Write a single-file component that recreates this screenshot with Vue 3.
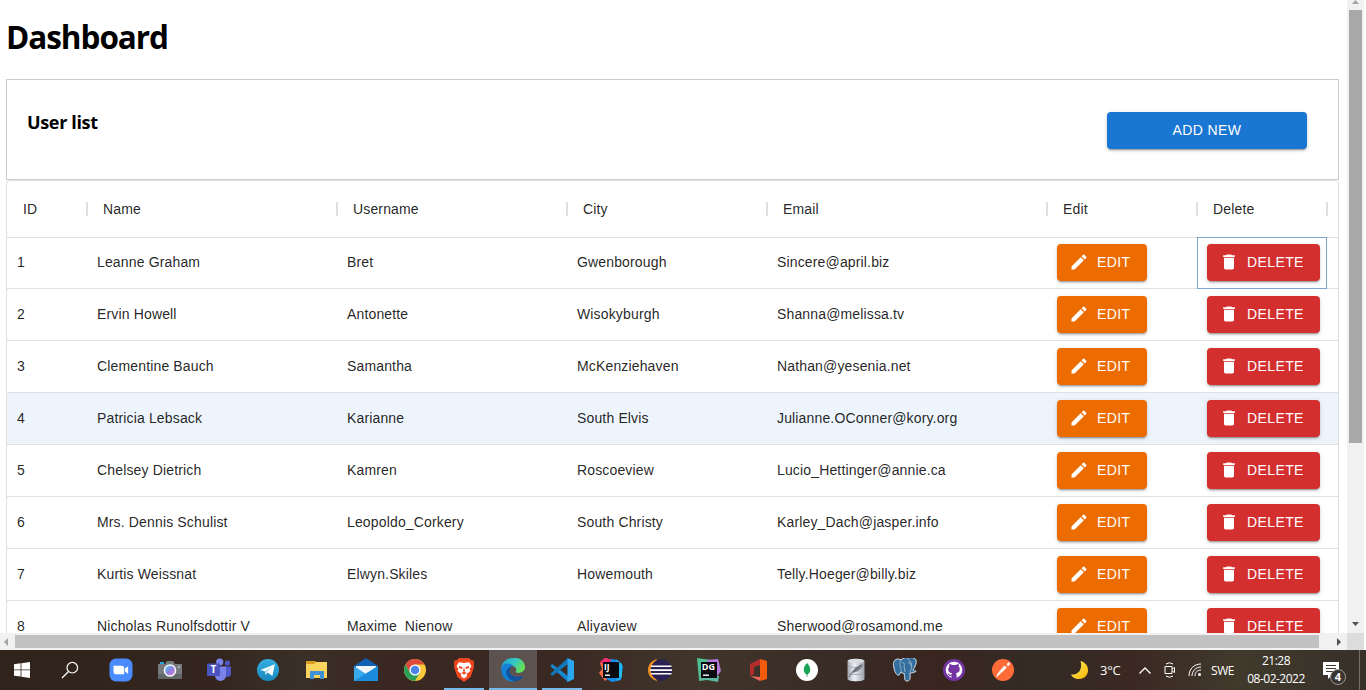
<script setup>
const columns = [
  { label: 'ID', key: 'id' },
  { label: 'Name', key: 'name' },
  { label: 'Username', key: 'username' },
  { label: 'City', key: 'city' },
  { label: 'Email', key: 'email' },
  { label: 'Edit', key: 'edit' },
  { label: 'Delete', key: 'delete' },
]
const users = [
  [1, 'Leanne Graham', 'Bret', 'Gwenborough', 'Sincere@april.biz'],
  [2, 'Ervin Howell', 'Antonette', 'Wisokyburgh', 'Shanna@melissa.tv'],
  [3, 'Clementine Bauch', 'Samantha', 'McKenziehaven', 'Nathan@yesenia.net'],
  [4, 'Patricia Lebsack', 'Karianne', 'South Elvis', 'Julianne.OConner@kory.org'],
  [5, 'Chelsey Dietrich', 'Kamren', 'Roscoeview', 'Lucio_Hettinger@annie.ca'],
  [6, 'Mrs. Dennis Schulist', 'Leopoldo_Corkery', 'South Christy', 'Karley_Dach@jasper.info'],
  [7, 'Kurtis Weissnat', 'Elwyn.Skiles', 'Howemouth', 'Telly.Hoeger@billy.biz'],
  [8, 'Nicholas Runolfsdottir V', 'Maxime_Nienow', 'Aliyaview', 'Sherwood@rosamond.me'],
]
</script>

<template>
  <div class="screen">
    <div class="browser">
      <main class="viewport">
        <h1>Dashboard</h1>
        <section class="panel">
          <h3>User list</h3>
          <button class="btn add">ADD NEW</button>
        </section>
        <section class="grid">
          <div class="row head">
            <div v-for="c in columns" :key="c.key" class="th">{{ c.label }}<i class="sep"></i></div>
          </div>
          <div v-for="u in users" :key="u[0]" class="row" :class="{ first: u[0] === 1, hovered: u[0] === 4 }">
            <div v-for="(v, i) in u" :key="i" class="td text">{{ v }}</div>
            <div class="td">
              <button class="btn edit">
                <svg viewBox="0 0 24 24"><path d="M3 17.25V21h3.75L17.81 9.94l-3.75-3.75L3 17.25zM20.71 7.04c.39-.39.39-1.02 0-1.41l-2.34-2.34a.996.996 0 0 0-1.41 0l-1.83 1.83 3.75 3.75 1.83-1.83z" /></svg>EDIT
              </button>
            </div>
            <div class="td" :class="{ focused: u[0] === 1 }">
              <button class="btn delete">
                <svg viewBox="0 0 24 24"><path d="M6 19c0 1.1.9 2 2 2h8c1.1 0 2-.9 2-2V7H6v12zM19 4h-3.5l-1-1h-5l-1 1H5v2h14V4z" /></svg>DELETE
              </button>
            </div>
          </div>
        </section>
      </main>
      <div class="vscroll">
        <svg class="arrow up" viewBox="0 0 7 4"><path d="M0 4 3.5 0 7 4z" /></svg>
        <div class="vthumb"></div>
        <svg class="arrow down" viewBox="0 0 7 4"><path d="M0 0h7L3.5 4z" /></svg>
      </div>
      <div class="hscroll">
        <svg class="arrow left" viewBox="0 0 4 8"><path d="M4 0v8L0 4z" /></svg>
        <div class="hthumb"></div>
        <svg class="arrow right" viewBox="0 0 4 8"><path d="M0 0v8l4-4z" /></svg>
      </div>
      <div class="corner"></div>
    </div>

    <footer class="taskbar">
      <div class="start">
        <svg width="16" height="16" viewBox="0 0 16 16" fill="#fff"><path d="M0 2.2 6.6 1.3v6.2H0zM7.4 1.2 16 0v7.5H7.4zM0 8.3h6.6v6.3L0 13.7zM7.4 8.3H16V16l-8.6-1.2z" /></svg>
      </div>
      <div class="search">
        <svg width="18" height="18" viewBox="0 0 18 18" fill="none" stroke="#fff" stroke-width="1.2"><circle cx="11.3" cy="6.7" r="5.3" /><path d="M7.5 10.5 1 17" /></svg>
      </div>
      <div class="apps">
        <!-- Zoom -->
        <div class="app"><svg viewBox="0 0 24 24"><rect x=".5" y=".5" width="23" height="23" rx="6.5" fill="#4a8cff" /><path d="M4.5 7.8h8.2c1.5 0 2.5 1 2.5 2.4v6H7c-1.5 0-2.5-1-2.5-2.4zM16 10.5l3.1-2.3v7.7L16 13.6z" fill="#fff" /></svg></div>
        <!-- Camera -->
        <div class="app"><svg viewBox="0 0 24 24">
          <defs><linearGradient id="lens" x1="0" y1="0" x2="1" y2="1"><stop stop-color="#4bd2f2" /><stop offset=".5" stop-color="#8a7fe0" /><stop offset="1" stop-color="#e478d2" /></linearGradient></defs>
          <path d="M2 4h4v3H2z" fill="#28a8d8" /><path d="M0 6h7l2-3h6l2 3h7v15H0z" fill="#777b7e" /><path d="M0 16h24v5H0z" fill="#62676a" /><circle cx="12" cy="12.5" r="6.3" fill="#f5f5f7" /><circle cx="12" cy="12.5" r="4.8" fill="url(#lens)" /><circle cx="21" cy="9" r="1" fill="#c6c6c6" /></svg></div>
        <!-- Teams -->
        <div class="app"><svg viewBox="0 0 24 24"><circle cx="20.5" cy="5" r="2.6" fill="#5059c9" /><circle cx="12.7" cy="4" r="3.6" fill="#7b83eb" /><path d="M17 8.5h7v7.3c0 4-6 4.2-7 .7z" fill="#5059c9" /><path d="M8 8.5h11v8.8c0 7.5-11 7.5-11 0z" fill="#7b83eb" /><rect y="5.5" width="13" height="12.5" rx="1" fill="#4b53bc" /><text x="6.5" y="15.3" text-anchor="middle" class="glyph" font-size="10">T</text></svg></div>
        <!-- Telegram -->
        <div class="app"><svg viewBox="0 0 24 24"><defs><linearGradient id="tg" x1="0" y1="0" x2="0" y2="1"><stop stop-color="#37aee2" /><stop offset="1" stop-color="#1689bf" /></linearGradient></defs><circle cx="12" cy="12" r="11" fill="url(#tg)" /><path d="M4.5 12 18.8 6.2 16.4 17.9 11.8 14.6 9.7 16.8 8.8 13.2z" fill="#fff" /><path d="m8.8 13.2 7.6-5-5.6 5.9-.8 2.7z" fill="#a9d3e8" /></svg></div>
        <!-- File Explorer -->
        <div class="app"><svg viewBox="0 0 24 24"><path d="M1 3h9l2 2h10v5H1z" fill="#d99c1c" /><path d="M1 6h8l2-2h11v16H1z" fill="#fbd35f" /><path d="M5 21v-8h14v8h-4v-4H9v4z" fill="#3d91d8" /></svg></div>
        <!-- Mail -->
        <div class="app"><svg viewBox="0 0 24 24"><path d="M0 8 12 0l12 8v3H0z" fill="#1260b4" /><path d="M2 8h20v8H2z" fill="#f2f5f8" /><path d="m0 8 12 8 12-8v15H0z" fill="#38a9ec" /><path d="m0 23 24-15v15z" fill="#1b8bde" /></svg></div>
        <!-- Chrome -->
        <div class="app"><svg viewBox="0 0 24 24"><circle cx="12" cy="12" r="11" fill="#f9c93c" /><path d="M2.5 6.5A11 11 0 0 1 21.5 6.5H12L7.2 14.7z" fill="#dc4b3e" /><path d="M2.5 6.5A11 11 0 0 0 12 23l4.8-8.2H7.2z" fill="#2c9f58" /><circle cx="12" cy="12" r="5.6" fill="#fff" /><circle cx="12" cy="12" r="4.3" fill="#4e83e8" /></svg></div>
        <!-- Brave -->
        <div class="app running"><svg viewBox="0 0 24 24"><path d="M7 0h10l2.5 2.5 2-.2L22 6l-.5 2 .5 1-3.4 10L12 24l-6.6-5L2 9l.5-1L2 6l.5-3.7 2 .2z" fill="#f3481d" /><path d="M12 5 7 4.2 4.5 8l2 3-.8 2 3.6 3-.5 2L12 20.500l3.2-2.500-.5-2 3.6-3-.8-2 2-3L17 4.200z" fill="#fff" /><path d="m7 8 3.500 1-.5 2-3-1zM17 8l-3.500 1 .5 2 3-1zM12 9l1 4-1 1.500-1-1.500zM9 15l3-1.300 3 1.300-3 1.500z" fill="#ee4a20" /></svg></div>
        <!-- Edge -->
        <div class="app running active"><svg viewBox="0 0 24 24"><defs><linearGradient id="edgeTop" x1="0" y1="0" x2="1" y2=".4"><stop stop-color="#1da2dc" /><stop offset=".6" stop-color="#35c8c0" /><stop offset="1" stop-color="#66df59" /></linearGradient></defs><path d="M.2 11C1-4 24-3.500 24 9c0 5-6 7.500-9.500 5 2.200-2.500 0-6-4-6C6 8 .5 9 .2 11z" fill="url(#edgeTop)" /><path d="M.2 11C1 3.500 9.500 4.700 12.500 8 8 7.500 5.500 12.500 8 17c2.500 4 6 5 9 4.500C9 27 0 21 .2 11z" fill="#1483d5" /><path d="M11 8.500c-6 5.500-.5 12.500 11.300 9.500-2.700 5.200-9.300 7-14.300 2.500-5-5-3-11.500 3-12z" fill="#1254a0" /><path d="M11 8.500c4 0 4.500 3 2.700 5.300-.7 1.200 1.200 2.500 3.800 2.300-4.500 1.800-9.500-3-6.500-7.600z" fill="#5c5250" /></svg></div>
        <!-- VS Code -->
        <div class="app running"><svg viewBox="0 0 24 24"><path d="m.2 8 2-2L18 18v6z" fill="#1588cf" /><path d="m.2 16 2 2L18 6V0z" fill="#1077ba" /><path d="M17.500 0 24 3v18l-6.500 3z" fill="#2aa5ee" /></svg></div>
        <!-- IntelliJ IDEA -->
        <div class="app"><svg viewBox="0 0 24 24"><path d="M1 5 6 0l7 2-2 17-5 4-6-8 3-4z" fill="#fb6a42" /><path d="m1 4 5-4 7 2-5 7z" fill="#f52a71" /><path d="m12 1 7 1 5 6-2 14-9 2-7-4z" fill="#168cee" /><path d="m17 2 6 4v13l-5 4z" fill="#20b8ec" /><path d="M4 4h16v16H4z" fill="#080a10" /><text x="5" y="12" class="glyph" font-size="8.5">IJ</text><path d="M6 16.500h5v1.400H6z" fill="#fff" /></svg></div>
        <!-- Eclipse -->
        <div class="app"><svg viewBox="0 0 24 24"><path d="M9 1C-3 4-3 20 9 23L5 12z" fill="#f7941e" /><circle cx="13.300" cy="12" r="10.700" fill="#2c2255" /><path d="M3 7.500h20.500v1.600H3zM2 11.200h22v1.700H2zM3 15h20.500v1.600H3z" fill="#fff" /></svg></div>
        <!-- DataGrip -->
        <div class="app"><svg viewBox="0 0 24 24"><path d="m0 0 14 2v15L2 22z" fill="#4fbf92" /><path d="m10 2 11-1 3 12-4 5-10 3z" fill="#b977e0" /><path d="m3 15 19 3-1 6-11-2-8 1z" fill="#5cb9a0" /><path d="M4 4h16v16H4z" fill="#080a10" /><text x="4.800" y="12" class="glyph" font-size="9">DG</text><path d="M6 16.500h6v1.400H6z" fill="#fff" /></svg></div>
        <!-- Office -->
        <div class="app"><svg viewBox="0 0 24 24"><path d="m14 1 7 2v18l-7 2z" fill="#f25a0c" /><path d="m14 1-10 5v12l4-2V9l6-2z" fill="#b42c2c" /><path d="m4 18 10 1v4z" fill="#e56a57" /></svg></div>
        <!-- MongoDB Compass -->
        <div class="app"><svg viewBox="0 0 24 24"><circle cx="12" cy="12" r="11" fill="#fff" /><path d="M12 5c5 5 3.500 10 0 12-3.500-2-5-7 0-12z" fill="#18a455" /><path d="M11.600 16h.8v3h-.8z" fill="#668f76" /></svg></div>
        <!-- SQLite -->
        <div class="app"><svg viewBox="0 0 24 24"><defs><linearGradient id="db"><stop stop-color="#9fa5ae" /><stop offset=".4" stop-color="#eef1f6" /><stop offset="1" stop-color="#9da3ad" /></linearGradient></defs><path d="M3.500 3c0-3 17-3 17 0v18c0 3-17 3-17 0z" fill="url(#db)" /><ellipse cx="12" cy="3" rx="8" ry="2" fill="#d8dde3" /><path d="M4 8c4 2 12 2 16 0M4 15c4 2 12 2 16 0" stroke="#a0a8b5" fill="none" /><path d="M8 15c1-4 5-7 11-9-1 4-4 8-11 9z" fill="#777f88" /><path d="M5 19c2-4 6-8 12-12" stroke="#5c646f" fill="none" /></svg></div>
        <!-- PostgreSQL -->
        <div class="app"><svg viewBox="0 0 24 24"><path d="M8 2C3-1-1 3 1 10c1 5 3 8 5 7l2-3c2 2 3 1 3 1 1 5 0 8 3 8 4 0 3-4 3-8 3 0 6-1 6-2-2 0-3 0-3-1 3-5 5-10 1-12-3-1-6 0-6 0-3-1-5 0-7 2z" fill="#336e9e" stroke="#d5e1e8" stroke-width="1" /><path d="M8 2C5 7 9 9 8 14M15 1c5 5 4 8 2 13M9 5c2-1 3 1 2 3l1 6M15 5c3-1 4 1 2 3" fill="none" stroke="#b5cbdb" stroke-width=".7" /></svg></div>
        <!-- GitHub Desktop -->
        <div class="app"><svg viewBox="0 0 24 24"><circle cx="12" cy="12" r="11" fill="#7434a4" /><circle cx="12" cy="12" r="8.300" fill="#fff" /><path d="M9.500 21v-3.200c-3 .8-3-1.800-4.300-2.300 2.200-.5 2 2 4.300 1.200 0-.8.3-1.200.7-1.500-4.500-.5-4.700-5-2.800-6.800-.4-1-.2-2 .1-2.300 1.500 0 2.500 1 2.500 1h4s1-1 2.500-1c.3.6.5 1.500.1 2.400 2 2 1.600 6.200-2.800 6.700.6.400.8 1.100.8 2V21z" fill="#7434a4" /></svg></div>
        <!-- Postman -->
        <div class="app"><svg viewBox="0 0 24 24"><circle cx="12" cy="12" r="11" fill="#ff6c37" /><path d="m16 6 2-1.500L19 6l-2 2zM13.500 8l2 1.500-5 5-2-1zM8.300 14l1.500 1-3 2.500-1 1.500 1-3z" fill="#fff" stroke="#fff" stroke-width=".7" /></svg></div>
      </div>
      <div class="tray">
        <svg class="moon" width="20" height="20" viewBox="0 0 20 20"><defs><linearGradient id="moon" x1="0" y1="0" x2="1" y2="1"><stop stop-color="#fff06a" /><stop offset="1" stop-color="#f5b400" /></linearGradient></defs><path d="M10.500 1C21 3.500 20.500 18 9.500 19 5.500 19.300 2 17 1 14.500 8 15.500 13 9.500 10.500 1z" fill="url(#moon)" /></svg>
        <span class="temp">3°C</span>
        <svg class="chev" width="12" height="7" viewBox="0 0 12 7" fill="none" stroke="#fff" stroke-width="1.300"><path d="M.5 6.500 6 1l5.500 5.500" /></svg>
        <svg class="meet" width="12" height="16" viewBox="0 0 12 16" fill="none" stroke="#fff"><path d="M1 4.500h7v7H1zM8 7l2.500-1.500v5L8 9M2 2Q5.500-.5 9 2M2 14q3.500 2.500 7 0" /></svg>
        <svg class="wifi" width="14" height="14" viewBox="0 0 14 14" fill="none" stroke="#fff"><path d="M1 13C1 6 6 1 13 1M4 13c0-5 4-9 9-9M7 13c0-4 2.500-6 6-6" /><circle cx="11.500" cy="11.500" r="1.500" fill="#fff" stroke="none" /></svg>
        <span class="lang">SWE</span>
        <div class="clock"><span>21:28</span><span>08-02-2022</span></div>
        <div class="notes">
          <svg width="16" height="17" viewBox="0 0 16 17"><path d="M0 0h16v13H9l-4 4v-4H0z" fill="#fff" /><path d="M3 3.500h10M3 6.500h10M3 9.500h7" stroke="#40372f" /></svg>
          <b>4</b>
        </div>
      </div>
    </footer>
  </div>
</template>

<style>
html, body { margin: 0; overflow: hidden; background: #fff; }
</style>

<style scoped>
* { box-sizing: border-box; }
.screen { width: 1366px; height: 690px; overflow: hidden; background: #fff; }
.browser { width: 1364px; height: 650px; display: grid; grid-template: 633px 17px / 1347px 17px; }
.viewport { overflow: hidden; padding: 17px 0 0 6px; font-family: "Liberation Sans", Arial, sans-serif; }
h1, h3 { margin: 0; font-family: "Open Sans", "Noto Sans", sans-serif; font-weight: 700; color: #000; }
h1 { height: 62px; font-size: 31.5px; line-height: 40px; letter-spacing: -1.05px; }
.panel { width: 1333px; height: 101px; display: flex; justify-content: space-between; align-items: flex-start; padding: 32px 31px 0 20px; border: 1px solid #ccc; }
h3 { font-size: 18px; line-height: 20px; letter-spacing: -.35px; }
.btn { display: flex; align-items: center; height: 37px; border: 0; border-radius: 4px; padding: 0 16px; font: 14px/24.5px "Liberation Sans", Arial, sans-serif; letter-spacing: .4px; color: #fff; box-shadow: 0 3px 1px -2px rgba(0,0,0,.2), 0 2px 2px rgba(0,0,0,.14), 0 1px 5px rgba(0,0,0,.12); }
.btn svg { width: 20px; height: 20px; margin: 0 8px 1px -4px; fill: currentColor; flex: none; }
.add { width: 200px; justify-content: center; background: #1976d2; }
.edit { width: 90px; background: #ed6c02; }
.delete { width: 113px; background: #d32f2f; }
.grid { width: 1333px; height: 520px; border: 1px solid #e0e0e0; border-radius: 4px; font-size: 14px; letter-spacing: .15px; color: rgba(0,0,0,.87); }
.row { display: grid; grid-template-columns: 80px 250px 230px 200px 280px 150px 130px 11px; height: 52px; border-bottom: 1px solid #e0e0e0; }
.row.head { height: 57px; }
.row.first { height: 51px; }
.row.hovered { background: #edf4fc; }
.th { position: relative; display: flex; align-items: center; padding-left: 16px; }
.sep { position: absolute; right: -1px; top: 21px; width: 2px; height: 14px; background: #e0e0e0; }
.td { display: flex; align-items: center; padding-left: 10px; white-space: nowrap; }
.td.text { padding-bottom: 1px; }
.first .td { padding-bottom: 1px; }
.first .td.text { padding-bottom: 2px; }
.td.focused { margin: -1px 0; border: 1px solid #7fa5ce; padding-left: 9px; }
.vscroll { display: flex; flex-direction: column; align-items: center; background: #f1f1f1; padding: 0 2px 7px; }
.vthumb { width: 13px; height: 433px; margin-top: 6px; background: #a8a8a8; }
.arrow { fill: #505050; flex: none; }
.up { width: 7px; height: 4px; fill: #a3a3a3; }
.down { width: 7px; height: 4px; margin-top: auto; }
.hscroll { display: flex; align-items: center; background: #f1f1f1; padding: 0 6px 0 4px; }
.left, .right { width: 4px; height: 8px; }
.left { fill: #a3a3a3; }
.hthumb { width: 1304px; height: 13px; margin-left: 7px; background: #c1c1c1; }
.right { margin-left: auto; }
.corner { background: #dcdcdc; }
.taskbar { height: 40px; display: flex; color: #fff; background: linear-gradient(90deg, #30231c 0, #34261f 220px, #3a3027 300px, #3a2722 390px, #3a2923 550px, #40352b 700px, #382a25 850px, #3a2520 930px, #332b25 1040px, #3b2823 1130px, #403a2c 1240px, #37302a 1366px); }
.start, .search, .app { display: flex; align-items: center; justify-content: center; flex: none; }
.start { width: 44px; }
.search { width: 53px; padding-right: 1px; }
.apps { display: flex; gap: 1px; flex: none; }
.app { width: 48px; }
.app svg { width: 24px; height: 24px; }
.running { background: linear-gradient(#78b9ec, #78b9ec) center bottom / 40px 2px no-repeat; }
.active { background: linear-gradient(#78b9ec, #78b9ec) center bottom / 48px 2px no-repeat, #5c5250; }
.glyph { font-family: "Open Sans", sans-serif; font-weight: 700; fill: #fff; }
.tray { flex: none; display: flex; align-items: center; font-family: "Open Sans", "Noto Sans", sans-serif; }
.tray > * { flex: none; }
.moon { margin-left: 43px; }
.temp { width: 24px; margin-left: 10px; font-size: 13px; letter-spacing: -.2px; }
.chev { margin-left: 15px; }
.meet { margin-left: 13px; }
.wifi { margin-left: 12px; }
.lang { width: 26px; margin-left: 9px; font-size: 12px; letter-spacing: -.4px; }
.clock { width: 62px; margin-left: 8px; display: flex; flex-direction: column; align-items: center; font-size: 12px; line-height: 18px; letter-spacing: -.5px; }
.notes { position: relative; width: 37px; height: 40px; margin-left: 16px; padding-top: 12px; border-right: 1px solid #777069; }
.notes svg { display: block; }
.notes b { position: absolute; left: 7px; top: 19px; width: 16px; height: 16px; border: 1px solid #9a9793; border-radius: 50%; background: #383532; font-size: 11px; line-height: 14px; text-align: center; }
</style>
